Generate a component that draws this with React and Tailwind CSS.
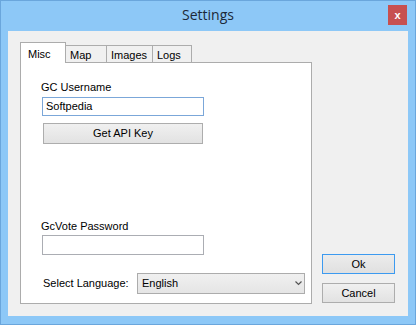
export default function App() {
    const tabs = [
        { label: 'Map', w: 'w-[41px]' },
        { label: 'Images', w: 'w-[46px]' },
        { label: 'Logs', w: 'w-[39px]' },
    ];

    return (
        <div className="w-[416px] h-[325px] bg-[#8dc8f7] border border-[#6aa6dc] flex flex-col font-['Liberation_Sans',Arial,sans-serif] text-[11px] text-black overflow-hidden">
            {/* Title bar */}
            <div className="h-[30px] flex items-start px-[7px]">
                <div className="w-[20px]" />
                <div className="flex-1 text-center mt-[3px] font-['Open_Sans',sans-serif] text-[14px] text-[#1c2838]">
                    Settings
                </div>
                <div className="w-[19px] h-[20px] mt-[4px] mr-[1px] bg-[#c75050] flex items-center justify-center text-white text-[11px] font-bold leading-none">
                    x
                </div>
            </div>

            {/* Client area */}
            <div className="mx-[7px] h-[285px] bg-[#f0f0f0] flex items-end pl-[12px] pb-[12px]">
                <div className="w-[292px] flex flex-col">
                    {/* Tabs */}
                    <div className="flex items-end h-[20px]">
                        <div className="w-[46px] h-[21px] -mb-px bg-white border border-b-0 border-[#acacac] relative z-10 pl-[7px] pt-[3px]">
                            Misc
                        </div>
                        {tabs.map((t) => (
                            <div
                                key={t.label}
                                className={`${t.w} h-[17px] border border-l-0 border-b-0 border-[#acacac] bg-[#f0f0f0] pl-[4px] pt-[1px]`}
                            >
                                {t.label}
                            </div>
                        ))}
                    </div>

                    {/* Panel */}
                    <div className="h-[242px] bg-white border border-[#acacac] flex flex-col pl-[21px] pt-[17px]">
                        <div className="leading-[15px] -ml-px">GC Username</div>
                        <div className="mt-[2px] w-[162px] h-[19px] border border-[#7ba7d9] flex items-center pl-[3px] leading-none">
                            Softpedia
                        </div>
                        <div className="mt-[7px] ml-px w-[160px] h-[21px] border border-[#adadad] bg-gradient-to-b from-[#f0f0f0] to-[#e2e2e2] flex items-center justify-center">
                            Get API Key
                        </div>

                        <div className="mt-[75px] leading-[15px] -ml-px">GcVote Password</div>
                        <div className="mt-px w-[162px] h-[20px] border border-[#abadb3]" />

                        <div className="mt-[18px] flex items-center">
                            <div className="w-[94px] ml-px">Select Language:</div>
                            <div className="w-[168px] h-[21px] border border-[#acacac] bg-gradient-to-b from-[#f0f0f0] to-[#e5e5e5] flex items-center pl-[4px] pr-[2px]">
                                <span className="flex-1">English</span>
                                <svg width="7" height="5" viewBox="0 0 7 5">
                                    <path d="M0.5 0.5 L3.5 3.5 L6.5 0.5" fill="none" stroke="#555" strokeWidth="1.2" />
                                </svg>
                            </div>
                        </div>
                    </div>
                </div>

                {/* Dialog buttons */}
                <div className="ml-[10px] mb-px flex flex-col gap-[9px]">
                    <div className="w-[73px] h-[20px] border border-[#3c9af0] bg-gradient-to-b from-[#ececec] to-[#e0e0e0] flex items-center justify-center">
                        Ok
                    </div>
                    <div className="w-[73px] h-[20px] border border-[#adadad] bg-gradient-to-b from-[#f0f0f0] to-[#e2e2e2] flex items-center justify-center">
                        Cancel
                    </div>
                </div>
            </div>
        </div>
    );
}
